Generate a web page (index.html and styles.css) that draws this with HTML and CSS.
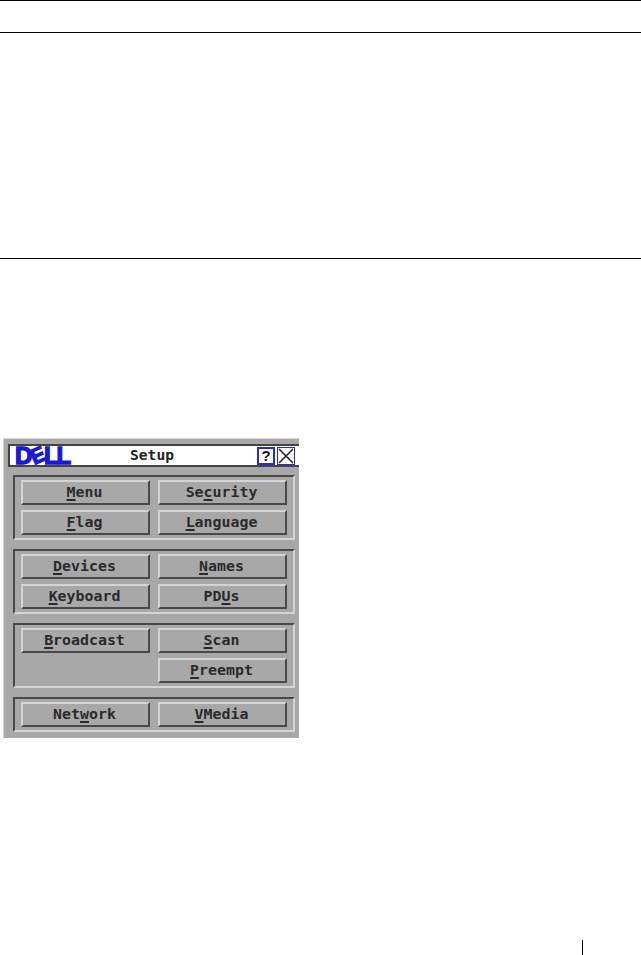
FILE: index.html
```html
<!DOCTYPE html>
<html lang="en">
<head>
<meta charset="utf-8">
<title>Setup</title>
<link rel="stylesheet" href="styles.css">
</head>
<body>
<div class="table">
  <div class="table-head"></div>
  <div class="table-body"></div>
</div>
<div class="figure">
  <div class="window">
    <div class="titlebar">
      <div class="logo"><span>D</span><span class="logo-e">E</span><span>L</span><span>L</span></div>
      <div class="title">Setup</div>
      <div class="tb-btn tb-help">?</div>
      <div class="tb-btn">
        <svg class="x-icon" viewBox="0 0 16 16"><path d="M1 1 15 15M15 1 1 15"/></svg>
      </div>
    </div>
    <div class="panels">
      <div class="panel">
        <div class="btn"><u>M</u>enu</div>
        <div class="btn">Se<u>c</u>urity</div>
        <div class="btn"><u>F</u>lag</div>
        <div class="btn"><u>L</u>anguage</div>
      </div>
      <div class="panel">
        <div class="btn"><u>D</u>evices</div>
        <div class="btn"><u>N</u>ames</div>
        <div class="btn"><u>K</u>eyboard</div>
        <div class="btn">PD<u>U</u>s</div>
      </div>
      <div class="panel">
        <div class="btn"><u>B</u>roadcast</div>
        <div class="btn"><u>S</u>can</div>
        <div class="btn-gap"></div>
        <div class="btn"><u>P</u>reempt</div>
      </div>
      <div class="panel">
        <div class="btn">Net<u>w</u>ork</div>
        <div class="btn"><u>V</u>Media</div>
      </div>
    </div>
  </div>
</div>
<div class="footer"><div class="footer-bar"></div></div>
</body>
</html>
```

FILE: styles.css
```css
* { box-sizing: border-box; }
html, body { margin: 0; padding: 0; background: #fff; }
body { width: 641px; height: 955px; overflow: hidden; font-family: "DejaVu Sans Mono", monospace; }

.table { border-top: 1px solid #000; }
.table-head { height: 32px; border-bottom: 1px solid #000; }
.table-body { height: 226px; border-bottom: 1px solid #000; }

.figure { padding: 179px 0 0 3px; }
.window {
  width: 296px;
  height: 300px;
  background: #a8a8a8;
  border-left: 1px solid #d8d8d0;
  border-top: 1px solid #d8d8d0;
  padding: 5px 0 0 4px;
  overflow: hidden;
}
.titlebar {
  height: 23px;
  margin-right: -1px;
  background: #fff;
  border: 2px solid #444;
  border-right: 0;
  display: flex;
  align-items: center;
  padding-right: 5px;
}
.logo {
  width: 62px;
  flex: none;
  margin-left: 5px;
  color: #1a1ad6;
  font: bold 24px/19px "Liberation Sans", sans-serif;
  -webkit-text-stroke: 1.4px #1a1ad6;
  letter-spacing: -2.2px;
  white-space: nowrap;
}
.logo span { display: inline-block; }
.logo-e { transform: rotate(-24deg) scale(0.9); }
.title {
  width: 140px;
  flex: none;
  text-align: center;
  font-size: 14.6px;
  font-weight: bold;
  color: #222;
  line-height: 18px;
  padding: 0 0 2px 10px;
}
.tb-btn {
  width: 18px;
  height: 18px;
  margin-left: 2px;
  flex: none;
  border: 1px solid #2a2ad0;
  display: flex;
  align-items: center;
  justify-content: center;
  font: bold 15px/16px "Liberation Sans", sans-serif;
  color: #111;
}
.tb-help { border-width: 2px; margin-left: auto; }
.x-icon { width: 16px; height: 16px; }
.x-icon path { stroke: #222; stroke-width: 1.5; fill: none; }

.panels { padding: 8px 0 0 5px; display: flex; flex-direction: column; gap: 9px; width: 287px; }
.panel {
  display: grid;
  grid-template-columns: 129px 129px;
  grid-auto-rows: 25px;
  gap: 5px 8px;
  padding: 3px 6px;
  border: 2px solid;
  border-color: #484848 #d4d4d4 #d4d4d4 #484848;
}
.btn {
  display: flex;
  align-items: center;
  justify-content: center;
  background: #a8a8a8;
  border: 2px solid;
  border-color: #d4d4d4 #484848 #484848 #d4d4d4;
  font-size: 14.9px;
  font-weight: bold;
  color: #2a2a2a;
  line-height: 20px;
  padding: 0 2px 2px 0;
  white-space: pre;
}
.btn u { text-decoration-thickness: 2px; text-underline-offset: 2px; }

.footer { padding: 202px 0 0 582px; }
.footer-bar { width: 1px; height: 15px; background: #000; }
```
